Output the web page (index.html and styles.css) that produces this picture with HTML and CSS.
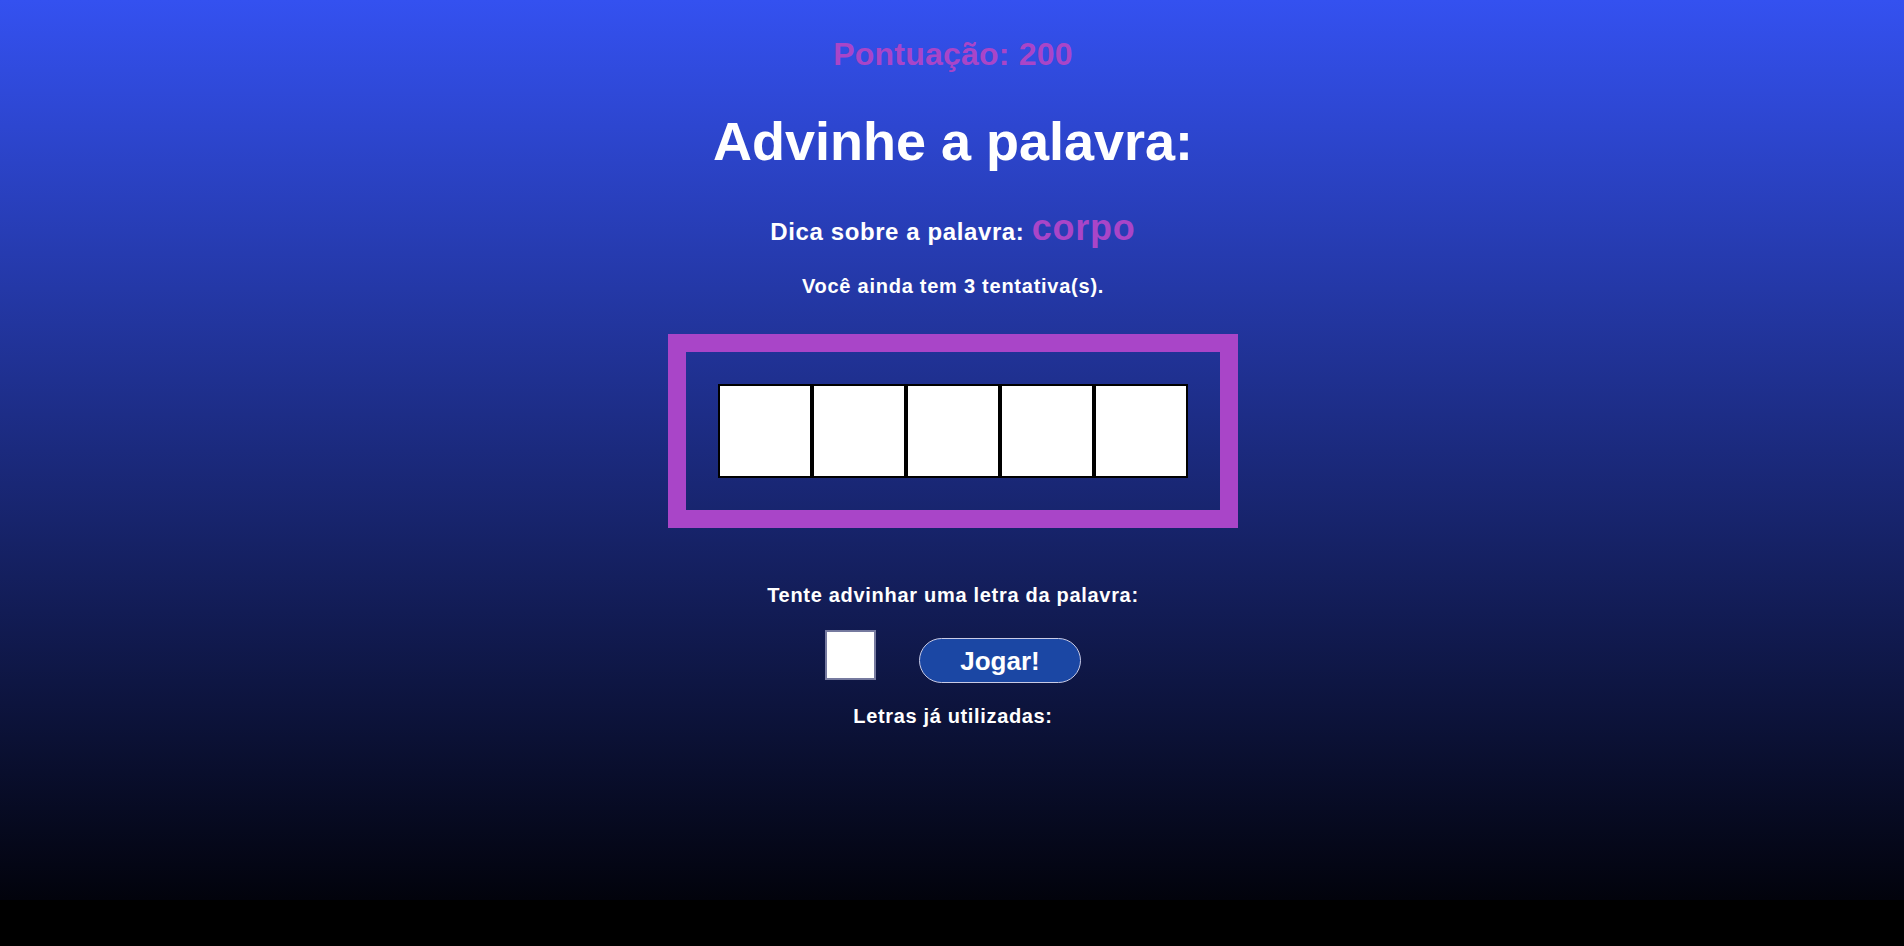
FILE: index.html
```html
<!DOCTYPE html>
<html lang="pt-BR">
<head>
<meta charset="utf-8">
<title>Advinhe a palavra</title>
<link rel="stylesheet" href="styles.css">
</head>
<body>
<main class="page">
  <p class="score">Pontuação: 200</p>
  <h1 class="title">Advinhe a palavra:</h1>
  <p class="hint">Dica sobre a palavra: <span class="hint-word">corpo</span></p>
  <p class="attempts">Você ainda tem 3 tentativa(s).</p>
  <section class="board">
    <div class="slot"></div>
    <div class="slot"></div>
    <div class="slot"></div>
    <div class="slot"></div>
    <div class="slot"></div>
  </section>
  <p class="prompt">Tente advinhar uma letra da palavra:</p>
  <form class="guess" onsubmit="return false">
    <input class="letter-input" type="text" maxlength="1" aria-label="letra">
    <button class="play" type="submit">Jogar!</button>
  </form>
  <p class="used">Letras já utilizadas:</p>
</main>
</body>
</html>
```

FILE: styles.css
```css
html {
  background: #000;
}

body {
  margin: 0;
  background: #000;
  font-family: "Liberation Sans", Arial, sans-serif;
  font-weight: bold;
  color: #fff;
}

.page {
  height: 900px;
  padding-left: 2px;
  background: linear-gradient(to bottom, #3451f0 0%, #02030c 100%);
  display: flex;
  flex-direction: column;
  align-items: center;
}

.score {
  margin: 38px 0 0;
  font-size: 32px;
  line-height: 32px;
  letter-spacing: 0.2px;
  color: #a945c8;
}

.title {
  margin: 44px 0 0;
  font-size: 54px;
  line-height: 54px;
}

.hint {
  margin: 52px 0 0;
  font-size: 24px;
  line-height: 24px;
  letter-spacing: 0.6px;
}

.hint-word {
  font-size: 36px;
  line-height: 0;
  letter-spacing: 0.8px;
  color: #a945c8;
}

.attempts {
  margin: 32px 0 0;
  font-size: 20px;
  line-height: 20px;
  letter-spacing: 0.75px;
}

.board {
  margin-top: 38px;
  display: flex;
  padding: 32px;
  border: 18px solid #a945c8;
}

.slot {
  width: 90px;
  height: 90px;
  background: #fff;
  border: 2px solid #000;
}

.prompt {
  margin: 57px 0 0;
  font-size: 20px;
  line-height: 20px;
  letter-spacing: 0.7px;
}

.guess {
  margin-top: 25px;
  display: flex;
  align-items: flex-start;
  gap: 43px;
}

.letter-input {
  box-sizing: border-box;
  width: 51px;
  height: 50px;
  margin: 0;
  padding: 0;
  border: 2px solid #767a9f;
  background: #fff;
  text-align: center;
  font-family: "Liberation Sans", Arial, sans-serif;
  font-size: 28px;
}

.play {
  box-sizing: border-box;
  margin-top: 8px;
  width: 162px;
  height: 45px;
  padding: 0;
  border: 1px solid #c9cbe6;
  border-radius: 23px;
  background: #1b47a4;
  color: #fff;
  font-family: "Liberation Sans", Arial, sans-serif;
  font-weight: bold;
  font-size: 26px;
  line-height: 26px;
}

.used {
  margin: 23px 0 0;
  font-size: 20px;
  line-height: 20px;
  letter-spacing: 0.65px;
}
```
